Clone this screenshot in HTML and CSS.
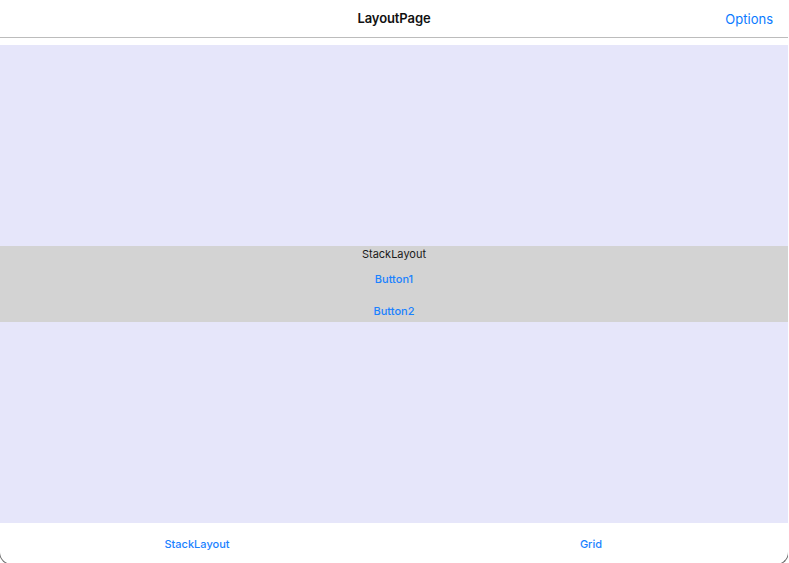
FILE: index.html
```html
<!DOCTYPE html>
<html>
<head>
<meta charset="utf-8">
<link rel="stylesheet" href="styles.css">
</head>
<body>
<div class="app">
  <header class="navbar">
    <div class="nav-side"></div>
    <div class="nav-title">LayoutPage</div>
    <div class="nav-side nav-right"><span class="nav-action">Options</span></div>
  </header>
  <main class="content">
    <div class="spacer"></div>
    <div class="stack">
      <div class="stack-label">StackLayout</div>
      <div class="stack-button first">Button1</div>
      <div class="stack-button last">Button2</div>
    </div>
    <div class="spacer"></div>
  </main>
  <nav class="tabbar">
    <div class="tab">StackLayout</div>
    <div class="tab">Grid</div>
  </nav>
  <div class="corners"></div>
</div>
</body>
</html>
```
FILE: styles.css
```css
html, body {
  margin: 0;
  padding: 0;
  background: #ffffff;
}
body {
  font-family: Inter, Roboto, "Noto Sans", sans-serif;
  -webkit-font-smoothing: antialiased;
}
.app {
  position: relative;
  width: 788px;
  height: 563px;
  display: flex;
  flex-direction: column;
  background: #ffffff;
  overflow: hidden;
}
.navbar {
  height: 37px;
  border-bottom: 1px solid #bcbcbc;
  display: grid;
  grid-template-columns: 1fr auto 1fr;
  align-items: center;
  flex: none;
}
.nav-title {
  font-size: 13px;
  font-weight: 600;
  color: #111111;
  letter-spacing: -0.1px;
  padding-bottom: 1px;
}
.nav-right {
  display: flex;
  justify-content: flex-end;
  padding-right: 15px;
}
.nav-action {
  font-size: 13px;
  color: #0a7aff;
  padding-top: 1px;
}
.content {
  margin-top: 7px;
  height: 478px;
  display: flex;
  flex-direction: column;
  background: #e6e6fa;
  flex: none;
}
.spacer {
  flex: 1;
}
.stack {
  background: #d3d3d3;
  display: flex;
  flex-direction: column;
  align-items: center;
  height: 76px;
}
.stack-label {
  font-size: 11px;
  line-height: 16px;
  color: #1a1a1a;
}
.stack-button {
  font-size: 11px;
  line-height: 14px;
  color: #1a82ff;
  font-weight: 500;
}
.stack-button.first {
  padding: 10px 0 9px;
}
.stack-button.last {
  padding: 9px 0 4px;
}
.tabbar {
  height: 40px;
  display: grid;
  grid-template-columns: 1fr 1fr;
  align-items: center;
  flex: none;
}
.tab {
  text-align: center;
  font-size: 11px;
  font-weight: 500;
  color: #1a82ff;
  padding-top: 1px;
}
.corners {
  position: absolute;
  left: -1px;
  right: -1px;
  bottom: -2px;
  height: 12px;
  border: 1px solid #6a6a6a;
  border-top: none;
  border-radius: 0 0 13px 13px;
  pointer-events: none;
}
```
